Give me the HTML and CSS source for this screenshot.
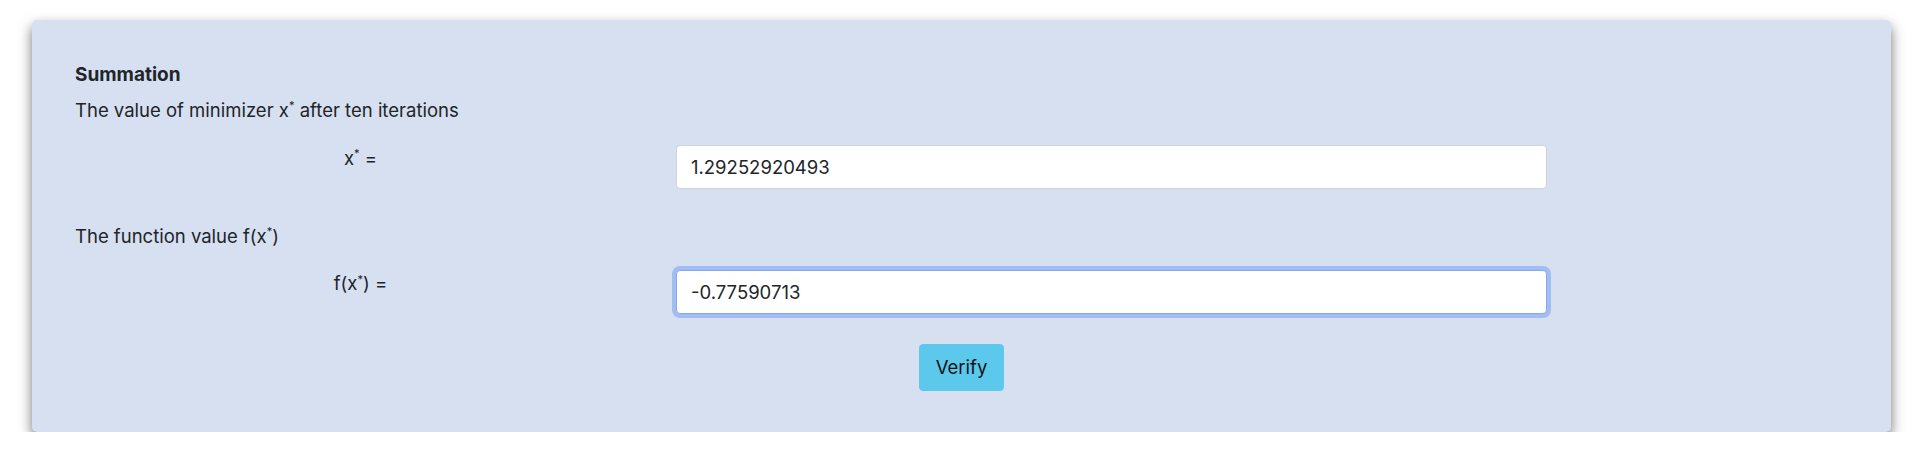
FILE: index.html
```html
<!DOCTYPE html>
<html lang="en">
<head>
<meta charset="utf-8">
<title>Summation</title>
<link rel="stylesheet" href="styles.css">
</head>
<body>
<div class="card">
  <h6 class="title">Summation</h6>
  <p class="desc">The value of minimizer x<sup>*</sup> after ten iterations</p>
  <div class="row">
    <div class="col-label">x<sup>*</sup> =</div>
    <div class="col-field"><input class="input" type="text" value="1.29252920493"></div>
  </div>
  <p class="desc">The function value f(x<sup>*</sup>)</p>
  <div class="row">
    <div class="col-label">f(x<sup>*</sup>) =</div>
    <div class="col-field"><input class="input input-focus" type="text" value="-0.77590713"></div>
  </div>
  <div class="actions"><button class="btn" type="button">Verify</button></div>
</div>
</body>
</html>
```
FILE: styles.css
```css
html, body {
  margin: 0;
  padding: 0;
  background: #ffffff;
}
body {
  font-family: Inter, "Noto Sans", "Liberation Sans", sans-serif;
  font-size: 18.5px;
  line-height: 1.5;
  color: #212529;
}
.card {
  margin: 20px 33px 0 32px;
  padding: 44px 43px 41px 43px;
  background: #d6e0f0;
  border-radius: 5px;
  box-shadow: 0 6px 13px rgba(0, 0, 0, 0.55);
}
.title {
  margin: 0 0 10px 0;
  font-size: 19px;
  font-weight: 700;
  line-height: 1.2;
}
.desc {
  margin: 0 0 20px 0;
}
sup {
  font-size: 60%;
  line-height: 0;
  position: relative;
  vertical-align: baseline;
  top: -0.6em;
}
.row {
  display: flex;
  margin: 0 -15px 34px -15px;
}
.col-label {
  flex: 0 0 33.3333%;
  box-sizing: border-box;
  padding: 0 15px;
  text-align: center;
}
.col-field {
  flex: 0 0 50%;
  box-sizing: border-box;
  padding: 0 15px;
}
.input {
  display: block;
  width: 100%;
  box-sizing: border-box;
  height: 44px;
  padding: 0 14px;
  font-family: inherit;
  font-size: 18.5px;
  color: #212529;
  background: #ffffff;
  border: 1px solid #ced4da;
  border-radius: 4px;
  outline: none;
}
.input-focus {
  border-color: #86a8f0;
  box-shadow: 0 0 0 4px rgba(120, 160, 245, 0.55);
}
.actions {
  display: flex;
  justify-content: center;
  margin-top: -4px;
}
.btn {
  font-family: inherit;
  font-size: 18.5px;
  line-height: 27px;
  padding: 9px 16px;
  color: #111111;
  background: #5bc8ec;
  border: 1px solid #5bc8ec;
  border-radius: 4px;
}
```
